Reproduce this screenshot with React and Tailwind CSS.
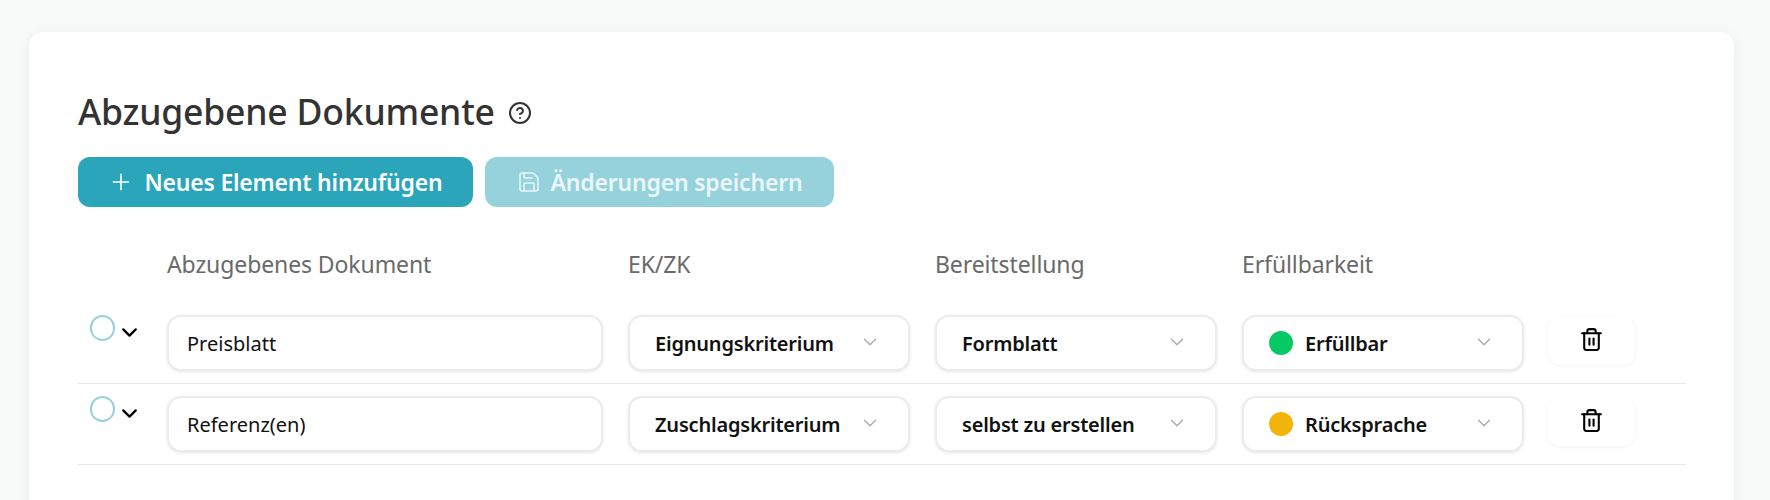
import React from 'react';
import { Plus, Save, ChevronDown, Trash2, CircleHelp } from 'lucide-react';

const rows = [
  { name: 'Preisblatt', kind: 'Eignungskriterium', supply: 'Formblatt', status: 'Erfüllbar', dot: 'bg-[#06c965]' },
  { name: 'Referenz(en)', kind: 'Zuschlagskriterium', supply: 'selbst zu erstellen', status: 'Rücksprache', dot: 'bg-[#f2b40a]' },
];

function Select({ label, dot }) {
  return (
    <div className="w-[282px] h-[56px] shrink-0 flex items-center pl-[25px] pr-[27px] bg-white border-2 border-[#ebecec] rounded-[14px] shadow-[0_1px_3px_rgba(0,0,0,0.1)]">
      {dot && <span className={`w-[24px] h-[24px] rounded-full mr-[12px] ${dot}`} />}
      <span className="flex-1 text-[20px] font-semibold text-[#111] tracking-[-0.2px] whitespace-nowrap translate-y-[1px]">{label}</span>
      <ChevronDown size={22} strokeWidth={1.5} className="text-[#aaa] -mt-[3px]" />
    </div>
  );
}

export default function App() {
  return (
    <div className="h-[500px] overflow-hidden bg-[#f8f9f9] px-[29px] pt-[32px] font-['Noto_Sans',sans-serif]">
      <div className="w-[1705px] h-[520px] bg-white rounded-[14px] shadow-[0_2px_14px_rgba(0,0,0,0.06)] pl-[49px] pr-[48px] pt-[56px]">
        <div className="flex items-center gap-[13px] h-[48px]">
          <h1 className="text-[35.5px] font-medium text-[#333] tracking-[-0.2px]">Abzugebene Dokumente</h1>
          <CircleHelp size={24} strokeWidth={2} className="text-[#333] mt-[2px]" />
        </div>
        <div className="flex gap-[12px] mt-[21px]">
          <button className="w-[395px] h-[50px] flex items-center justify-center gap-[10px] rounded-[12px] bg-[#2ba5b9] text-white text-[23px] font-semibold tracking-[-0.2px]">
            <Plus size={26} strokeWidth={1.5} />
            Neues Element hinzufügen
          </button>
          <button className="w-[349px] h-[50px] flex items-center justify-center gap-[10px] rounded-[12px] bg-[#95d2dc] text-white/80 text-[23px] font-semibold tracking-[-0.2px]">
            <Save size={24} strokeWidth={1.5} />
            Änderungen speichern
          </button>
        </div>

        <div className="flex mt-[42px] text-[23px] text-[#6a6a6a] tracking-[-0.1px] h-[30px] items-center">
          <div className="w-[89px] shrink-0" />
          <div className="w-[461px] shrink-0">Abzugebenes Dokument</div>
          <div className="w-[307px] shrink-0">EK/ZK</div>
          <div className="w-[307px] shrink-0">Bereitstellung</div>
          <div>Erfüllbarkeit</div>
        </div>

        <div className="mt-[36px] flex flex-col gap-[12px]">
          {rows.map((row) => (
            <div key={row.name} className="flex gap-[25px] h-[69px] border-b border-[#e2e7ee]">
              <div className="w-[64px] shrink-0 flex gap-[3px] pl-[12px]">
                <span className="w-[25px] h-[26px] rounded-full border-2 border-[#95d2dc]" />
                <ChevronDown size={25} strokeWidth={2.2} className="text-black mt-[5px] -ml-[1px]" />
              </div>
              <div className="w-[436px] h-[56px] shrink-0 flex items-center px-[18px] bg-white border-2 border-[#ebecec] rounded-[14px] shadow-[0_1px_3px_rgba(0,0,0,0.1)] text-[20px] text-[#111]">
                <span className="translate-y-[1px]">{row.name}</span>
              </div>
              <Select label={row.kind} />
              <Select label={row.supply} />
              <Select label={row.status} dot={row.dot} />
              <button className="w-[87px] h-[48px] shrink-0 -ml-[1px] mt-[2px] flex items-center justify-center rounded-[12px] bg-white shadow-[0_1px_4px_rgba(0,0,0,0.05)]">
                <Trash2 size={25} strokeWidth={2} className="text-black -mt-[3px]" />
              </button>
            </div>
          ))}
        </div>
      </div>
    </div>
  );
}
